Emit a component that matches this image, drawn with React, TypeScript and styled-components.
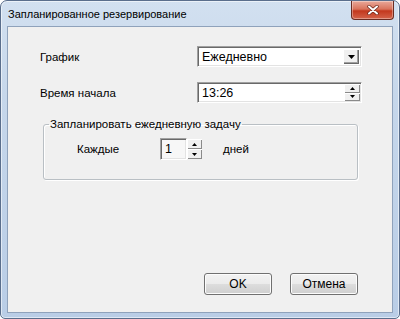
import styled, { createGlobalStyle } from "styled-components";

const GlobalStyle = createGlobalStyle`
  html, body {
    margin: 0;
    padding: 0;
    background: #ffffff;
  }
  body {
    font-family: "Liberation Sans", Arial, sans-serif;
    font-size: 12px;
    color: #000;
  }
`;

const Window = styled.div`
  width: 400px;
  height: 319px;
  box-sizing: border-box;
  display: flex;
  flex-direction: column;
  padding: 0 6px 5px;
  border: 1px solid #5a6e8c;
  border-radius: 7px 7px 5px 5px;
  background: linear-gradient(180deg, #d2e0f0 0%, #c6d7eb 30%, #b9cde6 100%);
  box-shadow: inset 0 0 0 1px rgba(255, 255, 255, 0.55);
`;

const TitleBar = styled.div`
  height: 25px;
  display: flex;
  align-items: flex-start;
  justify-content: space-between;
`;

const Title = styled.span`
  margin: 7px 0 0 1px;
  font-size: 11px;
  color: #000;
`;

const CloseButton = styled.button`
  width: 43px;
  height: 19px;
  margin: 0 -1px 0 0;
  padding: 0;
  display: flex;
  align-items: center;
  justify-content: center;
  border: 1px solid #6b2c22;
  border-top: none;
  border-radius: 0 0 4px 4px;
  background: linear-gradient(180deg, #e9a99a 0%, #d9735c 45%, #c3381e 55%, #d4634a 100%);
  box-shadow: inset 0 0 0 1px rgba(255, 255, 255, 0.35);
`;

const Client = styled.div`
  flex: 1;
  display: flex;
  flex-direction: column;
  padding: 19px 34px 17px 32px;
  background: #f0f0f0;
  border: 1px solid #8fa2bb;
`;

const FormGrid = styled.div`
  display: grid;
  grid-template-columns: 157px 165px;
  grid-auto-rows: 21px;
  row-gap: 15px;
  align-items: center;
`;

const Label = styled.span`
  font-size: 11.5px;
  color: #000;
`;

const Field = styled.div`
  height: 21px;
  box-sizing: border-box;
  display: flex;
  align-items: stretch;
  background: #ffffff;
  border-top: 1px solid #a0a0a0;
  border-left: 1px solid #a0a0a0;
  border-right: 1px solid #ffffff;
  border-bottom: 1px solid #ffffff;
  box-shadow: inset 1px 1px 0 #696969, inset -1px -1px 0 #e3e3e3;
`;

const FieldText = styled.span`
  flex: 1;
  display: flex;
  align-items: center;
  padding-left: 4px;
  font-size: 12.5px;
`;

const DropButton = styled.div`
  width: 16px;
  margin: 2px 2px 2px 0;
  display: flex;
  align-items: center;
  justify-content: center;
  background: #f0f0f0;
  box-shadow: inset 1px 1px 0 #ffffff, inset -1px -1px 0 #696969, inset -2px -2px 0 #a0a0a0;
`;

const SpinColumn = styled.div`
  width: 16px;
  display: flex;
  flex-direction: column;
  margin: 1px 1px 1px 0;
`;

const SpinButton = styled.div`
  flex: 1;
  display: flex;
  align-items: center;
  justify-content: center;
  background: #f0f0f0;
  box-shadow: inset 1px 1px 0 #ffffff, inset -1px -1px 0 #8a8a8a;
`;

const GroupBox = styled.fieldset`
  width: 315px;
  height: 63px;
  box-sizing: border-box;
  margin: 14px 0 0 3px;
  padding: 0 0 0 5px;
  border: 1px solid #b9bfc4;
  border-radius: 3px;
  box-shadow: 1px 1px 0 #ffffff, inset 1px 1px 0 #ffffff;
`;

const Legend = styled.legend`
  padding: 0 1px;
  font-size: 11.5px;
  line-height: 14px;
  color: #000;
`;

const GroupRow = styled.div`
  display: flex;
  align-items: center;
  margin-top: 7px;
  padding-left: 28px;
`;

const EveryLabel = styled(Label)`
  width: 83px;
`;

const SpinBox = styled.div`
  width: 43px;
  height: 22px;
  display: flex;
`;

const SpinInput = styled(Field)`
  width: 28px;
  height: 22px;
  background: #f7f7f7;
`;

const DaysLabel = styled(Label)`
  margin-left: 20px;
`;

const ButtonRow = styled.div`
  margin-top: auto;
  display: flex;
  justify-content: flex-end;
  gap: 18px;
`;

const PushButton = styled.button`
  width: 68px;
  height: 22px;
  padding: 0;
  font-family: "Liberation Sans", Arial, sans-serif;
  font-size: 12px;
  color: #000;
  border: 1px solid #707070;
  border-radius: 3px;
  background: linear-gradient(180deg, #f2f2f2 0%, #ebebeb 50%, #dddddd 51%, #cfcfcf 100%);
  box-shadow: inset 0 0 0 1px #fcfcfc;
`;

const DownArrow = () => (
  <svg width="7" height="4" viewBox="0 0 7 4">
    <path d="M0 0H7L3.5 4Z" fill="#000" />
  </svg>
);

const SmallArrow = ({ up }: { up?: boolean }) => (
  <svg width="5" height="3" viewBox="0 0 5 3">
    <path d={up ? "M0 3H5L2.5 0Z" : "M0 0H5L2.5 3Z"} fill="#000" />
  </svg>
);

const CloseGlyph = () => (
  <svg width="12" height="10" viewBox="0 0 12 10">
    <path
      d="M2 1.5L10 8.5M10 1.5L2 8.5"
      stroke="#6a2418"
      strokeWidth="3.4"
      strokeLinecap="round"
    />
    <path
      d="M2 1.5L10 8.5M10 1.5L2 8.5"
      stroke="#ffffff"
      strokeWidth="2"
      strokeLinecap="round"
    />
  </svg>
);

const Spinner = () => (
  <SpinColumn>
    <SpinButton>
      <SmallArrow up />
    </SpinButton>
    <SpinButton>
      <SmallArrow />
    </SpinButton>
  </SpinColumn>
);

export default function App() {
  return (
    <>
      <GlobalStyle />
      <Window>
        <TitleBar>
          <Title>Запланированное резервирование</Title>
          <CloseButton>
            <CloseGlyph />
          </CloseButton>
        </TitleBar>
        <Client>
          <FormGrid>
            <Label>График</Label>
            <Field>
              <FieldText>Ежедневно</FieldText>
              <DropButton>
                <DownArrow />
              </DropButton>
            </Field>
            <Label>Время начала</Label>
            <Field>
              <FieldText>13:26</FieldText>
              <Spinner />
            </Field>
          </FormGrid>
          <GroupBox>
            <Legend>Запланировать ежедневную задачу</Legend>
            <GroupRow>
              <EveryLabel>Каждые</EveryLabel>
              <SpinBox>
                <SpinInput>
                  <FieldText>1</FieldText>
                </SpinInput>
                <Spinner />
              </SpinBox>
              <DaysLabel>дней</DaysLabel>
            </GroupRow>
          </GroupBox>
          <ButtonRow>
            <PushButton>OK</PushButton>
            <PushButton>Отмена</PushButton>
          </ButtonRow>
        </Client>
      </Window>
    </>
  );
}
